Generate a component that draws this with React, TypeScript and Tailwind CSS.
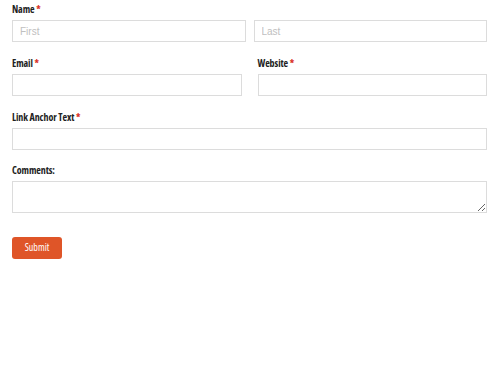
export default function App() {
  const label = "block h-[18px] pb-[3px] leading-[15px] text-[10px] font-bold text-[#222] font-['Open_Sans',sans-serif] font-stretch-condensed tracking-[-0.1px]";
  const input =
    "block w-full h-[22px] border border-[#dcdcdc] bg-white px-[7px] text-[10px] font-['Liberation_Sans',Arial,sans-serif] text-[#333] placeholder:text-[#c0c0c0] outline-none";
  const star = <span className="text-[#d93025]"> *</span>;

  return (
    <main className="w-[500px] h-[375px] bg-white pl-[12px] pt-[2px]">
      <form className="w-[475px] flex flex-col" onSubmit={(e) => e.preventDefault()}>
        <div className="flex flex-col">
          <label className={label}>Name{star}</label>
          <div className="flex gap-[8px]">
            <input className={input} placeholder="First" />
            <input className={input} placeholder="Last" />
          </div>
        </div>

        <div className="flex gap-[16px] mt-[14px]">
          <div className="flex-1 flex flex-col">
            <label className={label}>Email{star}</label>
            <input className={input} />
          </div>
          <div className="flex-1 flex flex-col">
            <label className={label}>Website{star}</label>
            <input className={input} />
          </div>
        </div>

        <div className="flex flex-col mt-[14px]">
          <label className={label}>Link Anchor Text{star}</label>
          <input className={input} />
        </div>

        <div className="flex flex-col mt-[13px]">
          <label className={label}>Comments:</label>
          <textarea className={input + " h-[32px] resize-y"} />
        </div>

        <div className="mt-[20px]">
          <button
            type="submit"
            className="w-[50px] h-[22px] rounded-[3px] bg-[#df5528] text-white text-[10px] font-['Open_Sans',sans-serif] font-stretch-condensed"
          >
            Submit
          </button>
        </div>
      </form>
    </main>
  );
}
